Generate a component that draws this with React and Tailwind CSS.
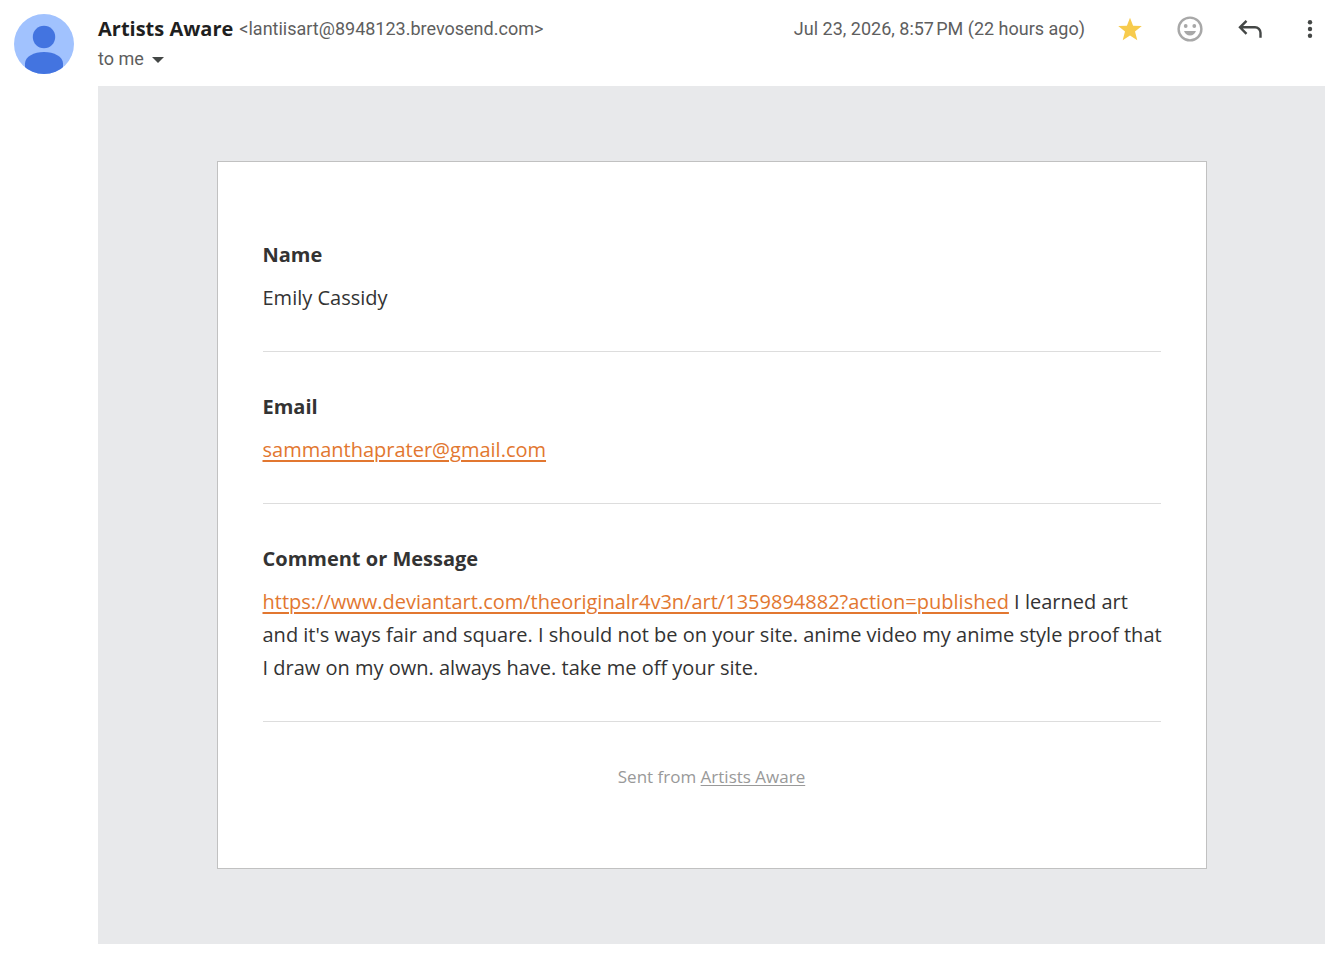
import { useState } from 'react';

const Avatar = () => (
  <svg viewBox="0 0 60 60" className="size-[60px] shrink-0" role="img" aria-label="Profile picture">
    <defs>
      <clipPath id="avatar-circle">
        <circle cx="30" cy="30" r="30" />
      </clipPath>
    </defs>
    <g clipPath="url(#avatar-circle)">
      <rect width="60" height="60" fill="#a1c2fe" />
      <circle cx="30" cy="23" r="11.2" fill="#4374e0" />
      <path d="M11 60V49.500C11 42.500 20 38 30 38s19 4.500 19 11.500V60z" fill="#4374e0" />
    </g>
  </svg>
);

const StarIcon = () => (
  <svg viewBox="0 0 30 30" className="size-[30px]" fill="#f7cb4d">
    <path d="M15 3.700l3.100 8 8.700.4-6.800 5.500 2.300 8.600L15 21.400 7.700 26.200l2.300-8.600L3.200 12.100l8.700-.4z" />
  </svg>
);

const SmileIcon = () => (
  <svg viewBox="0 0 30 30" className="size-[30px]" fill="#a8a8a8">
    <circle cx="15" cy="15" r="11.400" fill="none" stroke="#a8a8a8" strokeWidth="2.400" />
    <circle cx="10.700" cy="12" r="1.900" />
    <circle cx="19.300" cy="12" r="1.900" />
    <path d="M9 17h12c-.9 2.700-3.200 4.500-6 4.500s-5.100-1.800-6-4.500z" />
  </svg>
);

const ReplyIcon = () => (
  <svg viewBox="0 0 30 30" className="size-[30px]" fill="none" stroke="#444746" strokeWidth="2.400">
    <path d="M11.500 6.800L5 13.300l6.500 6.500M5 13.300h15a5.500 5.500 0 0 1 5.500 5.500v5" />
  </svg>
);

const MoreIcon = () => (
  <svg viewBox="0 0 30 30" className="size-[30px]" fill="#444746">
    <circle cx="15" cy="8.300" r="2.200" />
    <circle cx="15" cy="15" r="2.200" />
    <circle cx="15" cy="21.700" r="2.200" />
  </svg>
);

const actions = [
  { label: 'Starred', Icon: StarIcon },
  { label: 'Add reaction', Icon: SmileIcon },
  { label: 'Reply', Icon: ReplyIcon },
  { label: 'More', Icon: MoreIcon },
];

const Field = ({ label, children }) => (
  <section className="border-b border-[#dddddd] pt-[38px] pb-[37px]">
    <h2 className="mb-[10px] font-bold">{label}</h2>
    <p className="-mr-2">{children}</p>
  </section>
);

const linkClass = 'text-[#e27730] underline decoration-2 underline-offset-3';

const App = () => {
  const [starred, setStarred] = useState(true);

  return (
    <main className="min-h-screen bg-white pr-2 pb-[10px] pl-[14px] font-['Roboto','Liberation_Sans',sans-serif] text-[18px] leading-[30px] text-[#5e5e5e]">
      <div className="flex items-start gap-6 pt-[14px]">
        <Avatar />
        <header className="flex min-w-0 flex-1 items-start justify-between pb-3">
          <div>
            <div className="flex flex-wrap items-center gap-x-[6px]">
              <h1 className="font-['Open_Sans',sans-serif] text-[20px] font-bold text-[#1f1f1f]">Artists Aware</h1>
              <span>&lt;lantiisart@8948123.brevosend.com&gt;</span>
            </div>
            <button type="button" className="flex items-center gap-2">
              to me
              <svg viewBox="0 0 12 6" className="mt-px h-[6px] w-3" fill="#444746">
                <path d="M0 0h12L6 6z" />
              </svg>
            </button>
          </div>
          <div className="flex shrink-0 items-center gap-[30px]">
            <time dateTime="2026-07-23T20:57">Jul 23, 2026, 8:57&#8239;PM (22 hours ago)</time>
            {actions.map(({ label, Icon }) => (
              <button
                key={label}
                type="button"
                aria-label={label}
                aria-pressed={label === 'Starred' ? starred : undefined}
                onClick={() => label === 'Starred' && setStarred(!starred)}
                className={label === 'Starred' && !starred ? 'opacity-40' : ''}
              >
                <Icon />
              </button>
            ))}
          </div>
        </header>
      </div>

      {/* Message body */}
      <div className="ml-[84px] bg-[#e8e9eb] px-4 py-[75px]">
        <article className="mx-auto max-w-[990px] border border-[#c1c1c1] bg-white px-[45px] pt-[38px] pb-[76px] font-['Open_Sans','Noto_Sans',sans-serif] text-[20px] leading-[33px] text-[#333333]">
          <Field label="Name">Emily Cassidy</Field>
          <Field label="Email">
            <a href="mailto:sammanthaprater@gmail.com" className={linkClass}>sammanthaprater@gmail.com</a>
          </Field>
          <Field label="Comment or Message">
            <a href="https://www.deviantart.com/theoriginalr4v3n/art/1359894882?action=published" className={linkClass}>
              https://www.deviantart.com/theoriginalr4v3n/art/1359894882?action=published
            </a>{' '}
            I learned art and it's ways fair and square. I should not be on your site. anime video my anime style
            proof that I draw on my own. always have. take me off your site.
          </Field>
          <footer className="pt-10 text-center text-[17px] leading-[30px] text-[#999999]">
            Sent from <a href="#" className="underline underline-offset-2">Artists Aware</a>
          </footer>
        </article>
      </div>
    </main>
  );
};

export default App;
